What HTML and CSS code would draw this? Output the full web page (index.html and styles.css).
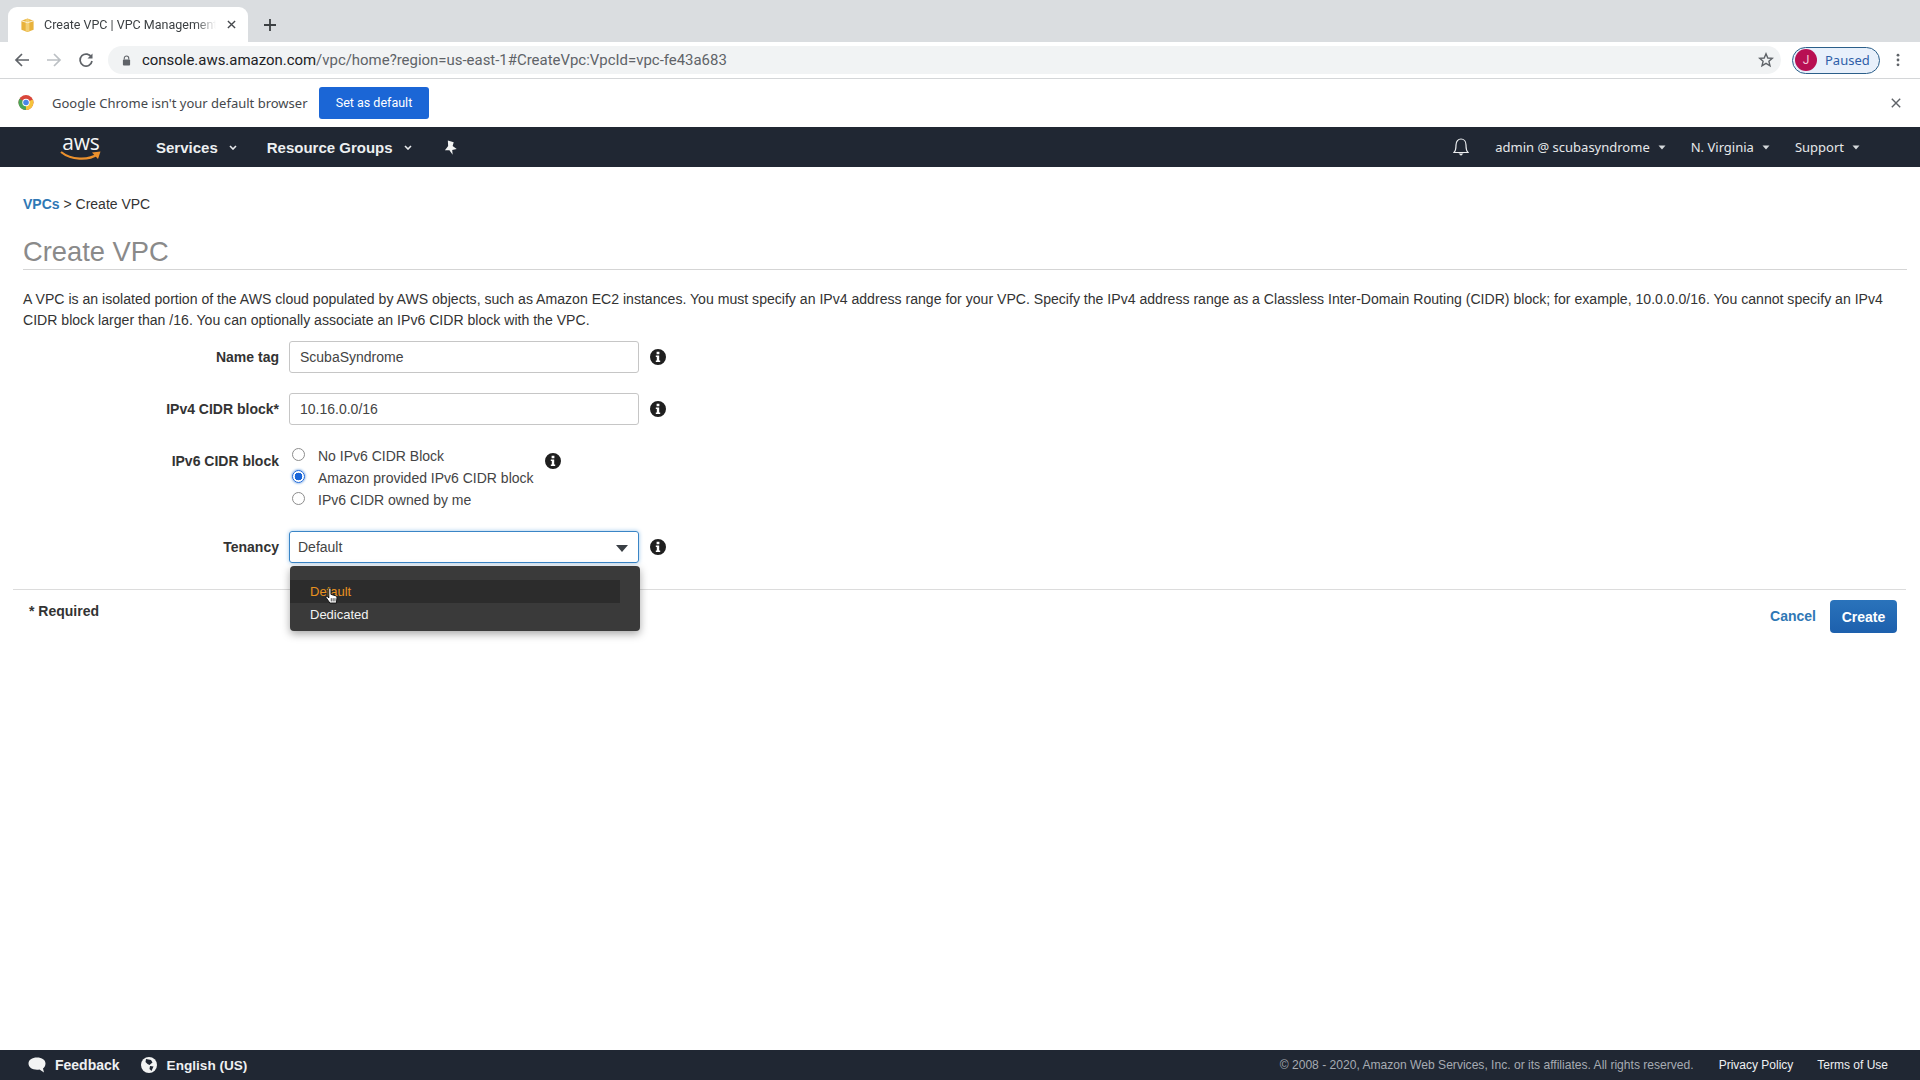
FILE: index.html
```html
<!DOCTYPE html>
<html lang="en">
<head>
<meta charset="utf-8">
<title>Create VPC | VPC Management Console</title>
<link rel="stylesheet" href="styles.css">
</head>
<body>
<div class="tabstrip">
  <div class="tab">
    <svg class="favicon" viewBox="0 0 16 16"><path d="M8 1 L14.5 3.5 V13 L8 15.5 L1.5 13 V3.5 Z" fill="#e8b23c"/><path d="M6 1.8 L10 1.8 L10 15 L6 15 Z" fill="#f3cf74"/><path d="M1.5 3.5 L8 5.5 L14.5 3.5" fill="none" stroke="#fff" stroke-width=".8"/></svg>
    <span class="tab-title">Create VPC | VPC Management Console</span>
    <svg class="tab-close" viewBox="0 0 10 10"><path d="M1 1 L9 9 M9 1 L1 9" stroke="#45484c" stroke-width="1.5"/></svg>
  </div>
  <svg class="newtab" viewBox="0 0 12 12"><path d="M6 0 V12 M0 6 H12" stroke="#3c4043" stroke-width="1.8"/></svg>
</div>

<div class="toolbar">
  <svg class="tool" viewBox="0 0 16 16"><path d="M15 8 H2 M8 2 L2 8 L8 14" fill="none" stroke="#5f6368" stroke-width="1.7"/></svg>
  <svg class="tool" viewBox="0 0 16 16"><path d="M1 8 H14 M8 2 L14 8 L8 14" fill="none" stroke="#bcc0c4" stroke-width="1.7"/></svg>
  <svg class="tool" viewBox="0 0 16 16"><path d="M13.5 5.5 A6 6 0 1 0 14 9" fill="none" stroke="#5f6368" stroke-width="1.7"/><path d="M14.5 1.5 V6.5 H9.5 Z" fill="#5f6368"/></svg>
  <div class="omnibox">
    <svg class="lock" viewBox="0 0 10 12"><path d="M2.5 5 V3.5 a2.5 2.5 0 0 1 5 0 V5" fill="none" stroke="#5f6368" stroke-width="1.2"/><rect x="1" y="5" width="8" height="6.5" rx="1" fill="#5f6368"/></svg>
    <span class="url"><span class="url-host">console.aws.amazon.com</span>/vpc/home?region=us-east-1#CreateVpc:VpcId=vpc-fe43a683</span>
    <svg class="star" viewBox="0 0 16 16"><path d="M8 1.8 L9.8 6 L14.3 6.4 L10.9 9.3 L12 13.8 L8 11.4 L4 13.8 L5.1 9.3 L1.7 6.4 L6.2 6 Z" fill="none" stroke="#5f6368" stroke-width="1.4"/></svg>
  </div>
  <div class="profile"><span class="avatar">J</span><span class="paused">Paused</span></div>
  <svg class="kebab" viewBox="0 0 4 16"><circle cx="2" cy="2.5" r="1.6" fill="#5f6368"/><circle cx="2" cy="8" r="1.6" fill="#5f6368"/><circle cx="2" cy="13.5" r="1.6" fill="#5f6368"/></svg>
</div>

<div class="infobar">
  <svg class="chrome" viewBox="0 0 16 16"><circle cx="8" cy="8" r="7.5" fill="#d9463a"/><path d="M8 8 L1.5 4.2 A7.5 7.5 0 0 0 8 15.5 Z" fill="#4aa557"/><path d="M8 8 L14.8 5 A7.5 7.5 0 0 1 8 15.5 Z" fill="#f5c33b"/><circle cx="8" cy="8" r="3.7" fill="#fff"/><circle cx="8" cy="8" r="2.8" fill="#4a86e8"/></svg>
  <span class="info-text">Google Chrome isn't your default browser</span>
  <span class="set-default">Set as default</span>
  <svg class="info-close" viewBox="0 0 10 10"><path d="M.8 .8 L9.2 9.2 M9.2 .8 L.8 9.2" stroke="#5f6368" stroke-width="1.4"/></svg>
</div>

<nav class="awsnav">
  <div class="aws-logo">
    <span class="aws-word">aws</span>
    <svg class="aws-smile" viewBox="0 0 42 12"><path d="M1 2 C11 10 28 11 38 4" fill="none" stroke="#ec912d" stroke-width="2.2"/><path d="M32 2.5 L40.5 1.5 L38 9 Z" fill="#ec912d"/></svg>
  </div>
  <span class="nav-main nav-services">Services</span>
  <svg class="caret caret-services" viewBox="0 0 8 5"><path d="M1 1 L4 4 L7 1" fill="none" stroke="#e8eaed" stroke-width="1.6"/></svg>
  <span class="nav-main nav-groups">Resource Groups</span>
  <svg class="caret caret-groups" viewBox="0 0 8 5"><path d="M1 1 L4 4 L7 1" fill="none" stroke="#e8eaed" stroke-width="1.6"/></svg>
  <svg class="pin" viewBox="0 0 12 14"><path d="M3.5 0.5 L9 2 L8 5.5 L11.8 8.5 L7.6 9.4 L8 13.8 L5 9.6 L0.8 9.6 L3.8 5.5 Z" fill="#f2f3f3"/></svg>
  <div class="nav-right">
    <svg class="bell" viewBox="0 0 16 18"><path d="M1 14.5 C3 12.5 3 10.5 3 7 C3 3.5 5.2 1 8 1 C10.8 1 13 3.5 13 7 C13 10.5 13 12.5 15 14.5 Z" fill="none" stroke="#eceef0" stroke-width="1.2"/><path d="M5.5 15.5 H10.5 L8 17.8 Z" fill="#eceef0"/></svg>
    <span class="nav-item nav-admin">admin @ scubasyndrome</span>
    <svg class="caret-small" viewBox="0 0 8 5"><path d="M0.5 0.5 H7.5 L4 4.5 Z" fill="#d5d9dc"/></svg>
    <span class="nav-item nav-region">N. Virginia</span>
    <svg class="caret-small" viewBox="0 0 8 5"><path d="M0.5 0.5 H7.5 L4 4.5 Z" fill="#d5d9dc"/></svg>
    <span class="nav-item nav-support">Support</span>
    <svg class="caret-small" viewBox="0 0 8 5"><path d="M0.5 0.5 H7.5 L4 4.5 Z" fill="#d5d9dc"/></svg>
  </div>
</nav>

<main class="content">
  <div class="breadcrumb"><a class="crumb-link">VPCs</a> &gt; Create VPC</div>
  <h1 class="page-title">Create VPC</h1>
  <p class="intro">A VPC is an isolated portion of the AWS cloud populated by AWS objects, such as Amazon EC2 instances. You must specify an IPv4 address range for your VPC. Specify the IPv4 address range as a Classless Inter-Domain Routing (CIDR) block; for example, 10.0.0.0/16. You cannot specify an IPv4 CIDR block larger than /16. You can optionally associate an IPv6 CIDR block with the VPC.</p>

  <form class="vpc-form">
    <div class="row row-name">
      <label class="field-label">Name tag</label>
      <div class="text-input">ScubaSyndrome</div>
      <svg class="info-icon" viewBox="0 0 16 16"><use href="#info"/></svg>
    </div>
    <div class="row row-cidr">
      <label class="field-label">IPv4 CIDR block*</label>
      <div class="text-input">10.16.0.0/16</div>
      <svg class="info-icon" viewBox="0 0 16 16"><use href="#info"/></svg>
    </div>
    <div class="row row-ipv6">
      <label class="field-label label-ipv6">IPv6 CIDR block</label>
      <div class="radios">
        <label class="radio"><input type="radio" name="v6">No IPv6 CIDR Block</label>
        <label class="radio"><input type="radio" name="v6" checked>Amazon provided IPv6 CIDR block</label>
        <label class="radio"><input type="radio" name="v6">IPv6 CIDR owned by me</label>
      </div>
      <svg class="info-icon info-ipv6" viewBox="0 0 16 16"><use href="#info"/></svg>
    </div>
    <div class="row row-tenancy">
      <label class="field-label">Tenancy</label>
      <div class="select-box">Default<svg class="select-arrow" viewBox="0 0 12 7"><path d="M0 0 H12 L6 7 Z" fill="#3a3f45"/></svg>
        <div class="dropdown">
          <div class="option option-active">Default</div>
          <div class="option">Dedicated</div>
          <svg class="hand" viewBox="0 0 12 16"><path d="M3.5 1.5 a1 1 0 0 1 2 0 V6.5 L9.8 7.8 C11 8.2 11 9 11 10 L10.5 14.5 H4.5 L1 9.5 C.6 8.6 1.8 8 2.5 8.7 L3.5 9.8 Z" fill="#fff" stroke="#111" stroke-width=".9"/><path d="M5.8 10 V13 M7.5 10 V13 M9.2 10 V13" stroke="#111" stroke-width=".7"/></svg>
        </div>
      </div>
      <svg class="info-icon" viewBox="0 0 16 16"><use href="#info"/></svg>
    </div>
  </form>

  <div class="actions">
    <span class="required">* Required</span>
    <a class="cancel">Cancel</a>
    <span class="create">Create</span>
  </div>
</main>

<footer class="footer">
  <svg class="foot-icon" viewBox="0 0 18 16"><path d="M9 .5 C14 .5 17.5 3 17.5 6.5 C17.5 9 16 11 15 11.5 L16 15.5 L11.5 12.5 C5 13.5 .5 10.5 .5 6.5 C.5 3 4 .5 9 .5 Z" fill="#f2f3f3"/></svg>
  <span class="foot-strong foot-feedback">Feedback</span>
  <svg class="foot-globe" viewBox="0 0 16 16"><circle cx="8" cy="8" r="8" fill="#f2f3f3"/><path d="M5 2 L10 3 L11.5 5.5 L8.5 8 L6.5 7 L4.5 5 Z M9 9 L12.5 9.5 L10.5 14 L8.5 12 Z" fill="#202733"/></svg>
  <span class="foot-strong foot-lang">English (US)</span>
  <span class="copyright">© 2008 - 2020, Amazon Web Services, Inc. or its affiliates. All rights reserved.</span>
  <span class="foot-link foot-privacy">Privacy Policy</span>
  <span class="foot-link foot-terms">Terms of Use</span>
</footer>

<svg class="defs" width="0" height="0"><defs><g id="info"><path fill-rule="evenodd" fill="#1f1f1f" d="M8 0 A8 8 0 1 1 8 16 A8 8 0 1 1 8 0 Z M6.6 2.8 V5.2 H9.4 V2.8 Z M5.8 6.6 V8 H6.8 V11.6 H5.8 V13 H10.2 V11.6 H9.2 V6.6 Z"/></g></defs></svg>
</body>
</html>
```

FILE: styles.css
```css
* { box-sizing: border-box; }
html, body { margin: 0; height: 100%; }
body {
  display: flex;
  flex-direction: column;
  width: 1920px;
  height: 1080px;
  overflow: hidden;
  background: #fff;
  font-family: "Liberation Sans", Arial, sans-serif;
  color: #333;
}
.defs { position: absolute; }

/* browser chrome */
.tabstrip {
  flex: none;
  height: 42px;
  background: #dadde0;
  display: flex;
  align-items: flex-end;
  padding-left: 8px;
}
.tab {
  width: 240px;
  height: 35px;
  background: #fff;
  border-radius: 9px 9px 0 0;
  display: flex;
  align-items: center;
  padding: 0 12px;
  font: 12.5px Roboto, sans-serif;
  color: #3c4043;
}
.favicon { width: 15px; height: 16px; flex: none; }
.tab-title {
  margin-left: 9px;
  width: 172px;
  white-space: nowrap;
  overflow: hidden;
  -webkit-mask-image: linear-gradient(90deg, #000 88%, transparent);
  mask-image: linear-gradient(90deg, #000 88%, transparent);
}
.tab-close { width: 9px; height: 9px; margin-left: 11px; flex: none; }
.newtab { width: 12px; height: 12px; margin: 0 0 11px 16px; }

.toolbar {
  flex: none;
  height: 37px;
  display: flex;
  align-items: center;
  background: #fff;
  border-bottom: 1px solid #d4d6d8;
  padding-left: 14px;
}
.tool { width: 16px; height: 16px; margin-right: 16px; flex: none; }
.omnibox {
  margin-left: -2px;
  width: 1673px;
  height: 28px;
  background: #f1f3f4;
  border-radius: 14px;
  display: flex;
  align-items: center;
  padding-left: 14px;
}
.lock { width: 9px; height: 11px; flex: none; }
.url { margin-left: 11px; font: 14.95px Roboto, sans-serif; color: #5f6368; white-space: nowrap; }
.url-host { color: #202124; }
.star { width: 16px; height: 16px; margin-left: auto; margin-right: 7px; }
.profile {
  margin-left: 11px;
  width: 88px;
  height: 27px;
  border: 1px solid #2b5f8a;
  border-radius: 14px;
  background: #e8f0fb;
  display: flex;
  align-items: center;
  padding-left: 2px;
}
.avatar {
  width: 22px;
  height: 22px;
  border-radius: 50%;
  background: #b80f53;
  color: #f4c9d9;
  font: 12px Roboto, sans-serif;
  display: flex;
  align-items: center;
  justify-content: center;
}
.paused { margin-left: 8px; font: 13px "Noto Sans", sans-serif; color: #2f5ea8; }
.kebab { width: 4px; height: 14px; margin-left: 16px; }

.infobar {
  flex: none;
  height: 48px;
  display: flex;
  align-items: center;
  background: #fff;
  padding-left: 18px;
  padding-bottom: 1px;
}
.chrome { width: 16px; height: 17px; flex: none; }
.info-text { margin-left: 18px; font: 13px "Noto Sans", sans-serif; color: #45484c; width: 267px; white-space: nowrap; }
.set-default {
  width: 110px;
  height: 32px;
  border-radius: 3px;
  background: #1b66d6;
  color: #fff;
  font: 12.5px Roboto, sans-serif;
  display: flex;
  align-items: center;
  justify-content: center;
}
.info-close { width: 10px; height: 10px; margin-left: auto; margin-right: 19px; }

/* AWS nav */
.awsnav {
  flex: none;
  height: 40px;
  background: #202733;
  display: flex;
  align-items: center;
  padding-left: 60px;
  color: #eceff1;
}
.aws-logo { width: 42px; height: 30px; position: relative; flex: none; }
.aws-word {
  display: block;
  font: 21px/20px "Open Sans", sans-serif;
  color: #f5f6f6;
  letter-spacing: -.2px;
  text-align: center;
}
.aws-smile { display: block; width: 42px; height: 12px; margin-top: -2px; }
.nav-main { font: bold 15px "Liberation Sans", sans-serif; color: #eceff1; white-space: nowrap; }
.nav-services { margin-left: 54px; }
.caret { width: 8px; height: 5px; flex: none; }
.caret-services { margin-left: 11px; }
.nav-groups { margin-left: 30px; }
.caret-groups { margin-left: 11px; }
.pin { width: 13px; height: 15px; margin-left: 32px; flex: none; }
.nav-right { margin-left: auto; display: flex; align-items: center; padding-right: 60px; }
.bell { width: 16px; height: 18px; margin-right: 26px; }
.nav-item { font: 13px "Noto Sans", sans-serif; color: #e6e8ea; white-space: nowrap; }
.caret-small { width: 8px; height: 5px; margin-left: 8px; flex: none; }
.nav-region { margin-left: 25px; }
.nav-support { margin-left: 25px; }

/* content */
.content {
  flex: 1;
  position: relative;
  padding: 0 13px;
  min-height: 0;
}
.breadcrumb { margin: 29px 0 0 10px; font-size: 14px; line-height: 16px; color: #333; }
.crumb-link { color: #2f78b5; font-weight: bold; }
.page-title {
  margin: 20px 0 0 10px;
  padding-bottom: 3px;
  height: 38px;
  font-weight: normal;
  font-size: 27.3px;
  line-height: 40px;
  color: #8a8a8a;
  border-bottom: 1px solid #d5d5d5;
}
.intro { margin: 18.5px 0 0 10px; font-size: 14.08px; line-height: 21px; color: #333; width: 1880px; }

.vpc-form { margin: 10.5px 0 0; }
.row { display: flex; align-items: center; }
.row-cidr { margin-top: 20px; }
.row-ipv6 { margin-top: 20px; align-items: flex-start; }
.row-tenancy { margin-top: 20px; }
.field-label {
  width: 266px;
  text-align: right;
  font-weight: bold;
  font-size: 14px;
  color: #333;
  white-space: nowrap;
}
.label-ipv6 { line-height: 16px; margin-top: 8px; }
.text-input {
  margin-left: 10px;
  width: 350px;
  height: 32px;
  border: 1px solid #c6c6c6;
  border-radius: 3px;
  padding-left: 10px;
  font-size: 14px;
  line-height: 30px;
  color: #444;
}
.info-icon { width: 16px; height: 16px; margin-left: 11px; flex: none; }
.info-ipv6 { margin: 8px 0 0 9px; }
.radios { margin-left: 10px; width: 247px; }
.radio { display: flex; align-items: center; height: 22px; font-size: 14px; color: #444; white-space: nowrap; }
.radio input {
  appearance: none;
  -webkit-appearance: none;
  margin: 0 13px 0 3px;
  width: 13px;
  height: 13px;
  border-radius: 50%;
  border: 1px solid #8d8d8d;
  background: #fff;
  position: relative;
  top: -2px;
  flex: none;
}
.radio input:checked {
  border: 1px solid #1a66d8;
  background: radial-gradient(circle, #1a66d8 0 3.6px, #fff 4.1px);
  box-shadow: 0 0 2px 1px #a9c8ee;
}
.select-box {
  margin-left: 10px;
  width: 350px;
  height: 32px;
  border: 1px solid #3a85c6;
  border-radius: 3px;
  box-shadow: 0 0 4px #9cc6ea;
  padding-left: 8px;
  font-size: 14px;
  line-height: 30px;
  color: #444;
  position: relative;
}
.select-arrow { position: absolute; right: 10px; top: 13px; width: 12px; height: 7px; }
.dropdown {
  position: absolute;
  left: 0;
  top: 34px;
  width: 350px;
  height: 65px;
  background: #3a3a3a;
  border-radius: 4px;
  box-shadow: 0 3px 8px rgba(0,0,0,.35);
  padding-top: 14px;
  z-index: 5;
}
.option { height: 23px; width: 330px; padding-left: 20px; font-size: 13px; line-height: 23px; color: #f2f2f2; }
.option-active { background: #2c2c2c; color: #e8911f; }
.hand { position: absolute; left: 35px; top: 21px; width: 13px; height: 18px; }

.actions {
  margin: 26px 0 0 0;
  height: 52px;
  width: 1893px;
  border-top: 1px solid #dcdcdc;
  display: flex;
  align-items: flex-start;
  padding-left: 16px;
  padding-right: 9px;
}
.required { margin-top: 13px; font-weight: bold; font-size: 14px; line-height: 16px; color: #333; }
.cancel { margin-left: auto; margin-top: 18px; font-weight: bold; font-size: 14px; line-height: 16px; color: #2f78b5; }
.create {
  margin: 10px 0 0 14px;
  width: 67px;
  height: 33px;
  border-radius: 4px;
  background: linear-gradient(#2a73bb, #1d60ad);
  color: #fff;
  font-weight: bold;
  font-size: 14px;
  display: flex;
  align-items: center;
  justify-content: center;
}

/* footer */
.footer {
  flex: none;
  height: 30px;
  background: #202733;
  display: flex;
  align-items: center;
  padding-left: 28px;
  color: #eef0f2;
}
.foot-icon { width: 18px; height: 16px; flex: none; }
.foot-strong { font-weight: bold; font-size: 14px; white-space: nowrap; }
.foot-feedback { margin-left: 9px; }
.foot-lang { font-size: 13.6px; }
.foot-globe { width: 16px; height: 16px; margin: 0 10px 0 21px; flex: none; }
.copyright { margin-left: auto; font-size: 12.08px; color: #a6abb2; white-space: nowrap; }
.foot-link { font-size: 12px; color: #eef0f2; white-space: nowrap; }
.foot-privacy { margin-left: 25px; }
.foot-terms { margin-left: 24px; margin-right: 32px; }
```
